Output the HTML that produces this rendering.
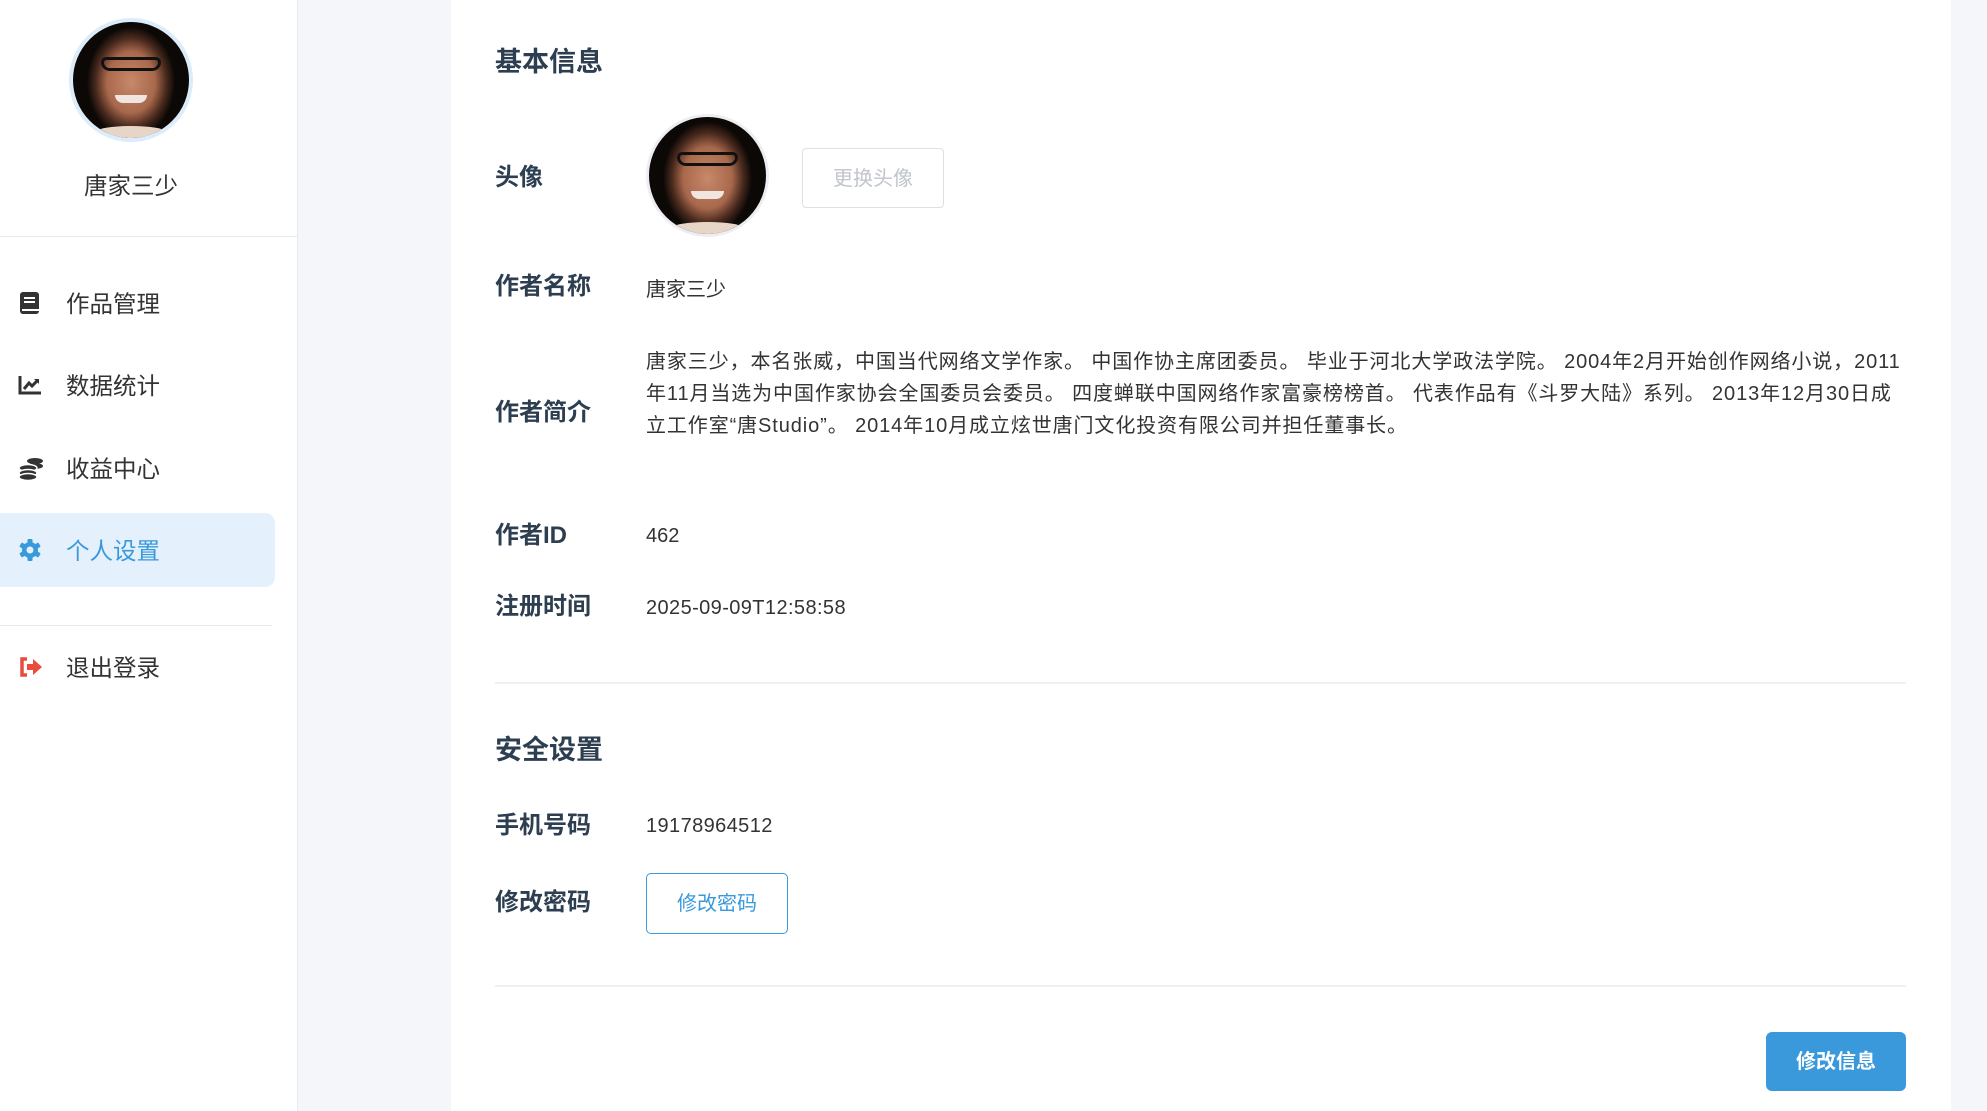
<!DOCTYPE html>
<html><head><meta charset="utf-8"><style>
*{margin:0;padding:0;box-sizing:border-box}
body{width:1987px;height:1111px;overflow:hidden;background:#f4f6fa;font-family:"Liberation Sans","Noto Sans CJK SC",sans-serif;position:relative}
.abs{position:absolute}
.side{left:0;top:0;width:298px;height:1111px;background:#fff;border-right:1px solid #e8eaee}
.card{left:451px;top:0;width:1500px;height:1111px;background:#fff}
.ava{border-radius:50%;overflow:hidden;background:radial-gradient(ellipse 38% 48% at 50% 52%,#c7896a 0%,#a8684c 55%,#4a2a1e 80%,#0c0806 100%)}
.ava .g{position:absolute;left:24%;top:30%;width:52%;height:12%;border:3px solid #111;border-radius:6px 6px 10px 10px}
.ava .m{position:absolute;left:36%;top:63%;width:28%;height:7%;background:#f0e6df;border-radius:0 0 12px 12px}
.ava .s{position:absolute;left:20%;bottom:0;width:60%;height:10%;background:#e7d6c8;border-radius:50% 50% 0 0}
.mi{left:0;width:275px;height:74px;display:flex;align-items:center;font-size:23.5px;color:#333}
.mi svg{position:absolute;left:17px}
.mi span{position:absolute;left:66px;top:19px}
.lab{left:495px;font-size:24px;font-weight:bold;color:#2c3e50;line-height:30px}
.val{left:646px;font-size:20px;color:#333;line-height:30px}
.h{left:495px;font-size:27px;font-weight:bold;color:#2c3e50;line-height:34px}
.hr{left:495px;width:1411px;height:2px;background:#eef0f3}
</style></head><body>
<div class="abs side">
 <div class="abs ava" style="left:69px;top:18px;width:124px;height:124px;border:4px solid #dcecfb"><div class="g"></div><div class="m"></div><div class="s"></div></div>
 <div class="abs" style="left:0;width:262px;top:171px;text-align:center;font-size:23.5px;color:#333;line-height:30px">唐家三少</div>
 <div class="abs" style="left:0;top:236px;width:297px;height:1px;background:#e8eaee"></div>
 <div class="abs mi" style="top:266px"><svg width="26" height="26" viewBox="0 0 26 26"><rect x="3" y="2" width="19" height="22" rx="3" fill="#333"/><rect x="7" y="7" width="11" height="2" fill="#fff"/><rect x="7" y="11" width="11" height="2" fill="#fff"/><rect x="5" y="19" width="17" height="2" fill="#fff"/></svg><span>作品管理</span></div>
 <div class="abs mi" style="top:348px"><svg width="26" height="26" viewBox="0 0 26 26"><path d="M3 4V21H24" stroke="#333" stroke-width="3" fill="none"/><path d="M7 17L12 11L15 14L21 8" stroke="#333" stroke-width="3" fill="none"/><path d="M17 7H22V12Z" fill="#333"/></svg><span>数据统计</span></div>
 <div class="abs mi" style="top:431px"><svg width="28" height="26" viewBox="0 0 28 26"><ellipse cx="18" cy="6" rx="8" ry="3" fill="#333"/><ellipse cx="18" cy="11" rx="8" ry="3" fill="#333"/><ellipse cx="11" cy="13" rx="9" ry="3.5" fill="#333" stroke="#fff" stroke-width="1.5"/><ellipse cx="11" cy="18" rx="9" ry="3.5" fill="#333" stroke="#fff" stroke-width="1.5"/><ellipse cx="11" cy="22" rx="9" ry="3.5" fill="#333" stroke="#fff" stroke-width="1.5"/></svg><span>收益中心</span></div>
 <div class="abs" style="left:0;top:513px;width:275px;height:74px;background:#e4f1fd;border-radius:0 10px 10px 0"></div>
 <div class="abs mi" style="top:513px;color:#3a99db"><svg width="26" height="26" viewBox="0 0 26 26"><g fill="#3a99db"><circle cx="13" cy="13" r="8"/><rect x="10.5" y="2" width="5" height="22" rx="1"/><rect x="10.5" y="2" width="5" height="22" rx="1" transform="rotate(60 13 13)"/><rect x="10.5" y="2" width="5" height="22" rx="1" transform="rotate(-60 13 13)"/></g><circle cx="13" cy="13" r="3.5" fill="#e4f1fd"/></svg><span>个人设置</span></div>
 <div class="abs" style="left:0;top:625px;width:272px;height:1px;background:#e8eaee"></div>
 <div class="abs mi" style="top:630px"><svg width="28" height="26" viewBox="0 0 28 26"><path d="M10 5H5V21H10" stroke="#e74c3c" stroke-width="3.5" fill="none"/><path d="M10 10H16V5L25 13L16 21V16H10Z" fill="#e74c3c"/></svg><span>退出登录</span></div>
</div>
<div class="abs card"></div>
<div class="abs h" style="top:45px">基本信息</div>
<div class="abs lab" style="top:163px">头像</div>
<div class="abs ava" style="left:646px;top:114px;width:123px;height:123px;border:3px solid #eceef1"><div class="g"></div><div class="m"></div><div class="s"></div></div>
<div class="abs" style="left:802px;top:148px;width:142px;height:60px;border:1.5px solid #dcdfe6;border-radius:4px;color:#c0c4cc;font-size:20px;text-align:center;line-height:60px">更换头像</div>
<div class="abs lab" style="top:272px">作者名称</div>
<div class="abs val" style="top:275px">唐家三少</div>
<div class="abs lab" style="top:398px">作者简介</div>
<div class="abs val" style="top:346px;width:1262px;line-height:32px;letter-spacing:0.9px">唐家三少，本名张威，中国当代网络文学作家。 中国作协主席团委员。 毕业于河北大学政法学院。 2004年2月开始创作网络小说，2011年11月当选为中国作家协会全国委员会委员。 四度蝉联中国网络作家富豪榜榜首。 代表作品有《斗罗大陆》系列。 2013年12月30日成立工作室“唐Studio”。 2014年10月成立炫世唐门文化投资有限公司并担任董事长。</div>
<div class="abs lab" style="top:521px">作者ID</div>
<div class="abs val" style="top:521px">462</div>
<div class="abs lab" style="top:592px">注册时间</div>
<div class="abs val" style="top:593px;letter-spacing:0.4px">2025-09-09T12:58:58</div>
<div class="abs hr" style="top:682px"></div>
<div class="abs h" style="top:733px">安全设置</div>
<div class="abs lab" style="top:811px">手机号码</div>
<div class="abs val" style="top:811px;letter-spacing:0.4px">19178964512</div>
<div class="abs lab" style="top:888px">修改密码</div>
<div class="abs" style="left:646px;top:873px;width:142px;height:61px;border:1.5px solid #3a99db;border-radius:5px;color:#3a99db;font-size:20px;text-align:center;line-height:61px">修改密码</div>
<div class="abs hr" style="top:985px"></div>
<div class="abs" style="left:1766px;top:1032px;width:140px;height:59px;background:#3a99db;border-radius:6px;color:#fff;font-size:20px;font-weight:bold;text-align:center;line-height:61px">修改信息</div>
</body></html>
